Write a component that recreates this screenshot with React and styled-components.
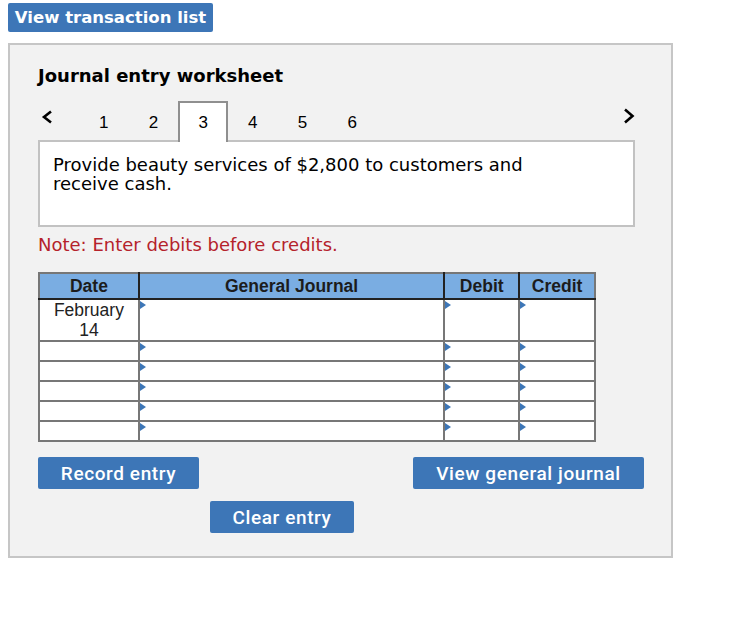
import styled, { createGlobalStyle } from "styled-components";

const GlobalStyle = createGlobalStyle`
  body {
    margin: 0;
    background: #ffffff;
    font-family: "DejaVu Sans", Verdana, sans-serif;
    color: #000;
  }
`;

const Page = styled.div`
  padding: 3px 0 0 8px;
  width: 665px;
`;

const BlueButton = styled.button`
  display: block;
  background: #3d76b7;
  color: #fff;
  border: none;
  border-radius: 2px;
  font-family: ${(p) => (p.verdana ? '"DejaVu Sans", Verdana, sans-serif' : 'Roboto, "Liberation Sans", sans-serif')};
  font-weight: ${(p) => (p.verdana ? 700 : 500)};
  font-size: ${(p) => (p.verdana ? "16.5px" : "19px")};
  letter-spacing: ${(p) => (p.verdana ? "0" : "0.6px")};
  height: ${(p) => p.h || 32}px;
  width: ${(p) => p.w}px;
  padding: 0;
  cursor: pointer;
`;

const Panel = styled.div`
  margin-top: 11px;
  border: 2px solid #c6c6c6;
  background: #f2f2f2;
  padding: 20px 36px 26px 28px;
  height: 515px;
  box-sizing: border-box;
`;

const Title = styled.h2`
  margin: 0;
  font-size: 18px;
  font-weight: 700;
  line-height: 22px;
`;

const TabRow = styled.div`
  display: flex;
  align-items: flex-end;
  margin-top: 12px;
  height: 41px;
`;

const Chevron = styled.svg`
  align-self: flex-start;
  flex: none;
  margin-top: ${(p) => p.mt}px;
  margin-left: ${(p) => p.ml}px;
  margin-right: ${(p) => p.mr || 0}px;
`;

const Tab = styled.div`
  width: 51px;
  height: 41px;
  box-sizing: border-box;
  display: flex;
  align-items: center;
  justify-content: center;
  padding-top: 1px;
  font-family: "Liberation Sans", Arial, sans-serif;
  font-size: 17px;
  background: ${(p) => (p.active ? "#fff" : "transparent")};
  border: ${(p) => (p.active ? "2px solid #8f8f8f" : "2px solid transparent")};
  border-bottom: none;
  margin-bottom: -2px;
  position: relative;
  z-index: 1;
`;

const Prompt = styled.div`
  border: 2px solid #c2c2c2;
  background: #fff;
  height: 87px;
  box-sizing: border-box;
  width: 597px;
  padding: 14px 13px;
  font-size: 18px;
  line-height: 18.5px;
`;

const Note = styled.div`
  color: #b5222b;
  font-size: 18px;
  margin-top: 8px;
  line-height: 20px;
`;

const Table = styled.table`
  margin-top: 17px;
  border-collapse: collapse;
  width: 558px;
  font-family: "Liberation Sans", Arial, sans-serif;
  font-size: 17.5px;
  background: #fff;
  border: 2px solid #777;
`;

const Th = styled.th`
  background: #7aade2;
  color: #1c1c1c;
  font-weight: 700;
  height: 24px;
  padding: 0;
  border-left: 2px solid #222;
  border-bottom: 2px solid #222;
  width: ${(p) => p.w}px;
  &:first-child {
    border-left: 2px solid #777;
  }
`;

const Td = styled.td`
  border: 2px solid #777;
  padding: 0;
  height: ${(p) => p.h}px;
  position: relative;
  text-align: center;
  vertical-align: top;
  line-height: 20px;
  color: #222;
`;

const Marker = styled.span`
  position: absolute;
  left: 0;
  top: 1px;
  width: 0;
  height: 0;
  border-top: 4px solid transparent;
  border-bottom: 4px solid transparent;
  border-left: 6px solid #3d76b7;
`;

const ButtonRow = styled.div`
  display: flex;
  justify-content: space-between;
  margin-top: 15px;
  width: 606px;
`;

const CenterRow = styled.div`
  margin-top: 12px;
  padding-left: 172px;
`;

const rows = [
  { h: 40, date: ["February", "14"] },
  { h: 18 },
  { h: 18 },
  { h: 18 },
  { h: 18 },
  { h: 18 },
];

export default function App() {
  return (
    <>
      <GlobalStyle />
      <Page>
        <BlueButton verdana w={205} h={29}>
          View transaction list
        </BlueButton>
        <Panel>
          <Title>Journal entry worksheet</Title>
          <TabRow>
            <Chevron width="12" height="14" viewBox="0 0 12 14" mt={11} ml={3} mr={26}>
              <polyline points="10,1.5 3,7 10,12.5" fill="none" stroke="#000" strokeWidth="2.6" />
            </Chevron>
            {[1, 2, 3, 4, 5, 6].map((n) => (
              <Tab key={n} active={n === 3}>
                {n}
              </Tab>
            ))}
            <Chevron width="12" height="16" viewBox="0 0 12 16" mt={9} ml={246}>
              <polyline points="2,1.5 9.5,8 2,14.5" fill="none" stroke="#000" strokeWidth="2.6" />
            </Chevron>
          </TabRow>
          <Prompt>
            Provide beauty services of $2,800 to customers and
            <br />
            receive cash.
          </Prompt>
          <Note>Note: Enter debits before credits.</Note>
          <Table>
            <thead>
              <tr>
                <Th w={98}>Date</Th>
                <Th w={305}>General Journal</Th>
                <Th w={73}>Debit</Th>
                <Th w={74}>Credit</Th>
              </tr>
            </thead>
            <tbody>
              {rows.map((r, i) => (
                <tr key={i}>
                  <Td h={r.h}>
                    {r.date && (
                      <>
                        {r.date[0]}
                        <br />
                        {r.date[1]}
                      </>
                    )}
                  </Td>
                  <Td h={r.h}>
                    <Marker />
                  </Td>
                  <Td h={r.h}>
                    <Marker />
                  </Td>
                  <Td h={r.h}>
                    <Marker />
                  </Td>
                </tr>
              ))}
            </tbody>
          </Table>
          <ButtonRow>
            <BlueButton w={161}>Record entry</BlueButton>
            <BlueButton w={231}>View general journal</BlueButton>
          </ButtonRow>
          <CenterRow>
            <BlueButton w={144}>Clear entry</BlueButton>
          </CenterRow>
        </Panel>
      </Page>
    </>
  );
}
